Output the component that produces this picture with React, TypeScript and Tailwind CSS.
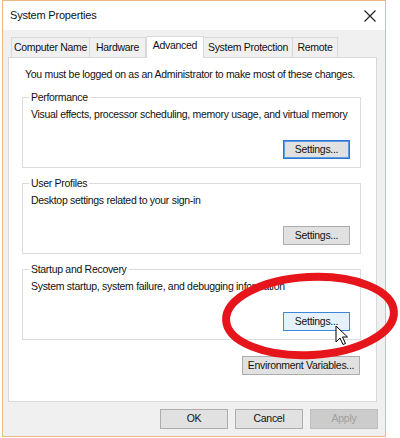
import React from "react";

const font = { fontFamily: '"Liberation Sans", Arial, sans-serif' };

type Variant = "normal" | "focus" | "hover" | "disabled";

function Btn({ label, variant = "normal", className = "" }: { label: string; variant?: Variant; className?: string }) {
  const look =
    variant === "focus"
      ? "border-[#2a78d4] bg-[#e1e1e1] text-[#111] shadow-[inset_0_0_0_1px_#5c9be0]"
      : variant === "hover"
      ? "border-[#3c87d8] bg-[#e5f1fb] text-[#111]"
      : variant === "disabled"
      ? "border-[#bfbfbf] bg-[#cccccc] text-[#a0a0a0]"
      : "border-[#adadad] bg-[#e1e1e1] text-[#111]";
  return (
    <div className={`border flex items-center justify-center ${look} ${className}`}>
      {label}
    </div>
  );
}

function Group({ title, desc, variant }: { title: string; desc: string; variant: Variant }) {
  return (
    <div className="relative w-[339px] ml-[13px] h-[71px] border border-[#dcdcdc] pt-[9px] pl-[8px]">
      <div className="absolute -top-[8px] left-[6px] bg-white px-[2px] leading-[14px]">{title}</div>
      <div className="leading-[14px]">{desc}</div>
      <div className="flex justify-end mt-[19px] pr-[10px]">
        <Btn label="Settings..." variant={variant} className="w-[67px] h-[19px]" />
      </div>
    </div>
  );
}

const tab = "h-[20px] flex items-center justify-center border border-b-0 border-[#d9d9d9] bg-[#f0f0f0]";

export default function App() {
  return (
    <div
      className="w-[400px] h-[438px] bg-white relative overflow-hidden text-[10.5px] tracking-[-0.3px] text-[#111]"
      style={font}
    >
      <div className="ml-[2px] w-[384px] h-[437px] border border-[#e9bc83] bg-[#f0f0f0] flex flex-col">
        {/* title bar */}
        <div className="h-[29px] bg-white flex items-center justify-between pl-[7px] pr-[9px]">
          <span className="text-[11px] tracking-[-0.2px]">System Properties</span>
          <svg width="12" height="12" viewBox="0 0 12 12">
            <path d="M0.5 0.5 L11.5 11.5 M11.5 0.5 L0.5 11.5" stroke="#222" strokeWidth="1.2" />
          </svg>
        </div>

        {/* tabs */}
        <div className="flex items-end h-[22px] mt-[5px] pl-[8px]">
          <div className={`${tab} w-[79px]`}>Computer Name</div>
          <div className={`${tab} w-[56px] border-l-0`}>Hardware</div>
          <div className="h-[22px] w-[58px] -mb-[1px] pb-[3px] relative z-10 flex items-center justify-center border border-b-0 border-[#d9d9d9] bg-white">
            Advanced
          </div>
          <div className={`${tab} w-[89px] border-l-0`}>System Protection</div>
          <div className={`${tab} w-[45px] border-l-0`}>Remote</div>
        </div>

        {/* panel */}
        <div className="ml-[5px] w-[369px] h-[345px] border border-[#d9d9d9] bg-white flex flex-col">
          <div className="leading-[14px] pl-[16px] pt-[9px]">
            You must be logged on as an Administrator to make most of these changes.
          </div>
          <div className="mt-[16px] flex flex-col gap-[15px]">
            <Group
              title="Performance"
              desc="Visual effects, processor scheduling, memory usage, and virtual memory"
              variant="focus"
            />
            <Group title="User Profiles" desc="Desktop settings related to your sign-in" variant="normal" />
            <Group
              title="Startup and Recovery"
              desc="System startup, system failure, and debugging information"
              variant="hover"
            />
          </div>
          <div className="flex justify-end pr-[16px] mt-[16px]">
            <Btn label="Environment Variables..." className="w-[118px] h-[19px]" />
          </div>
        </div>

        {/* footer */}
        <div className="flex justify-end gap-[7px] mt-[7px] pr-[7px]">
          <Btn label="OK" className="w-[68px] h-[20px]" />
          <Btn label="Cancel" className="w-[68px] h-[20px]" />
          <Btn label="Apply" variant="disabled" className="w-[68px] h-[20px]" />
        </div>
      </div>

      {/* red annotation ellipse and mouse pointer over the dialog */}
      <svg className="absolute left-0 top-0 pointer-events-none" width="400" height="438">
        <ellipse
          cx="310"
          cy="316"
          rx="84"
          ry="39"
          transform="rotate(-3 310 316)"
          fill="none"
          stroke="#e6141b"
          strokeWidth="8"
        />
        <path
          d="M336 326 L336 342 L340 338 L343 344.5 L345.5 343.5 L342.5 337 L347.5 337 Z"
          fill="#fff"
          stroke="#000"
          strokeWidth="1"
          strokeLinejoin="round"
        />
      </svg>
    </div>
  );
}
